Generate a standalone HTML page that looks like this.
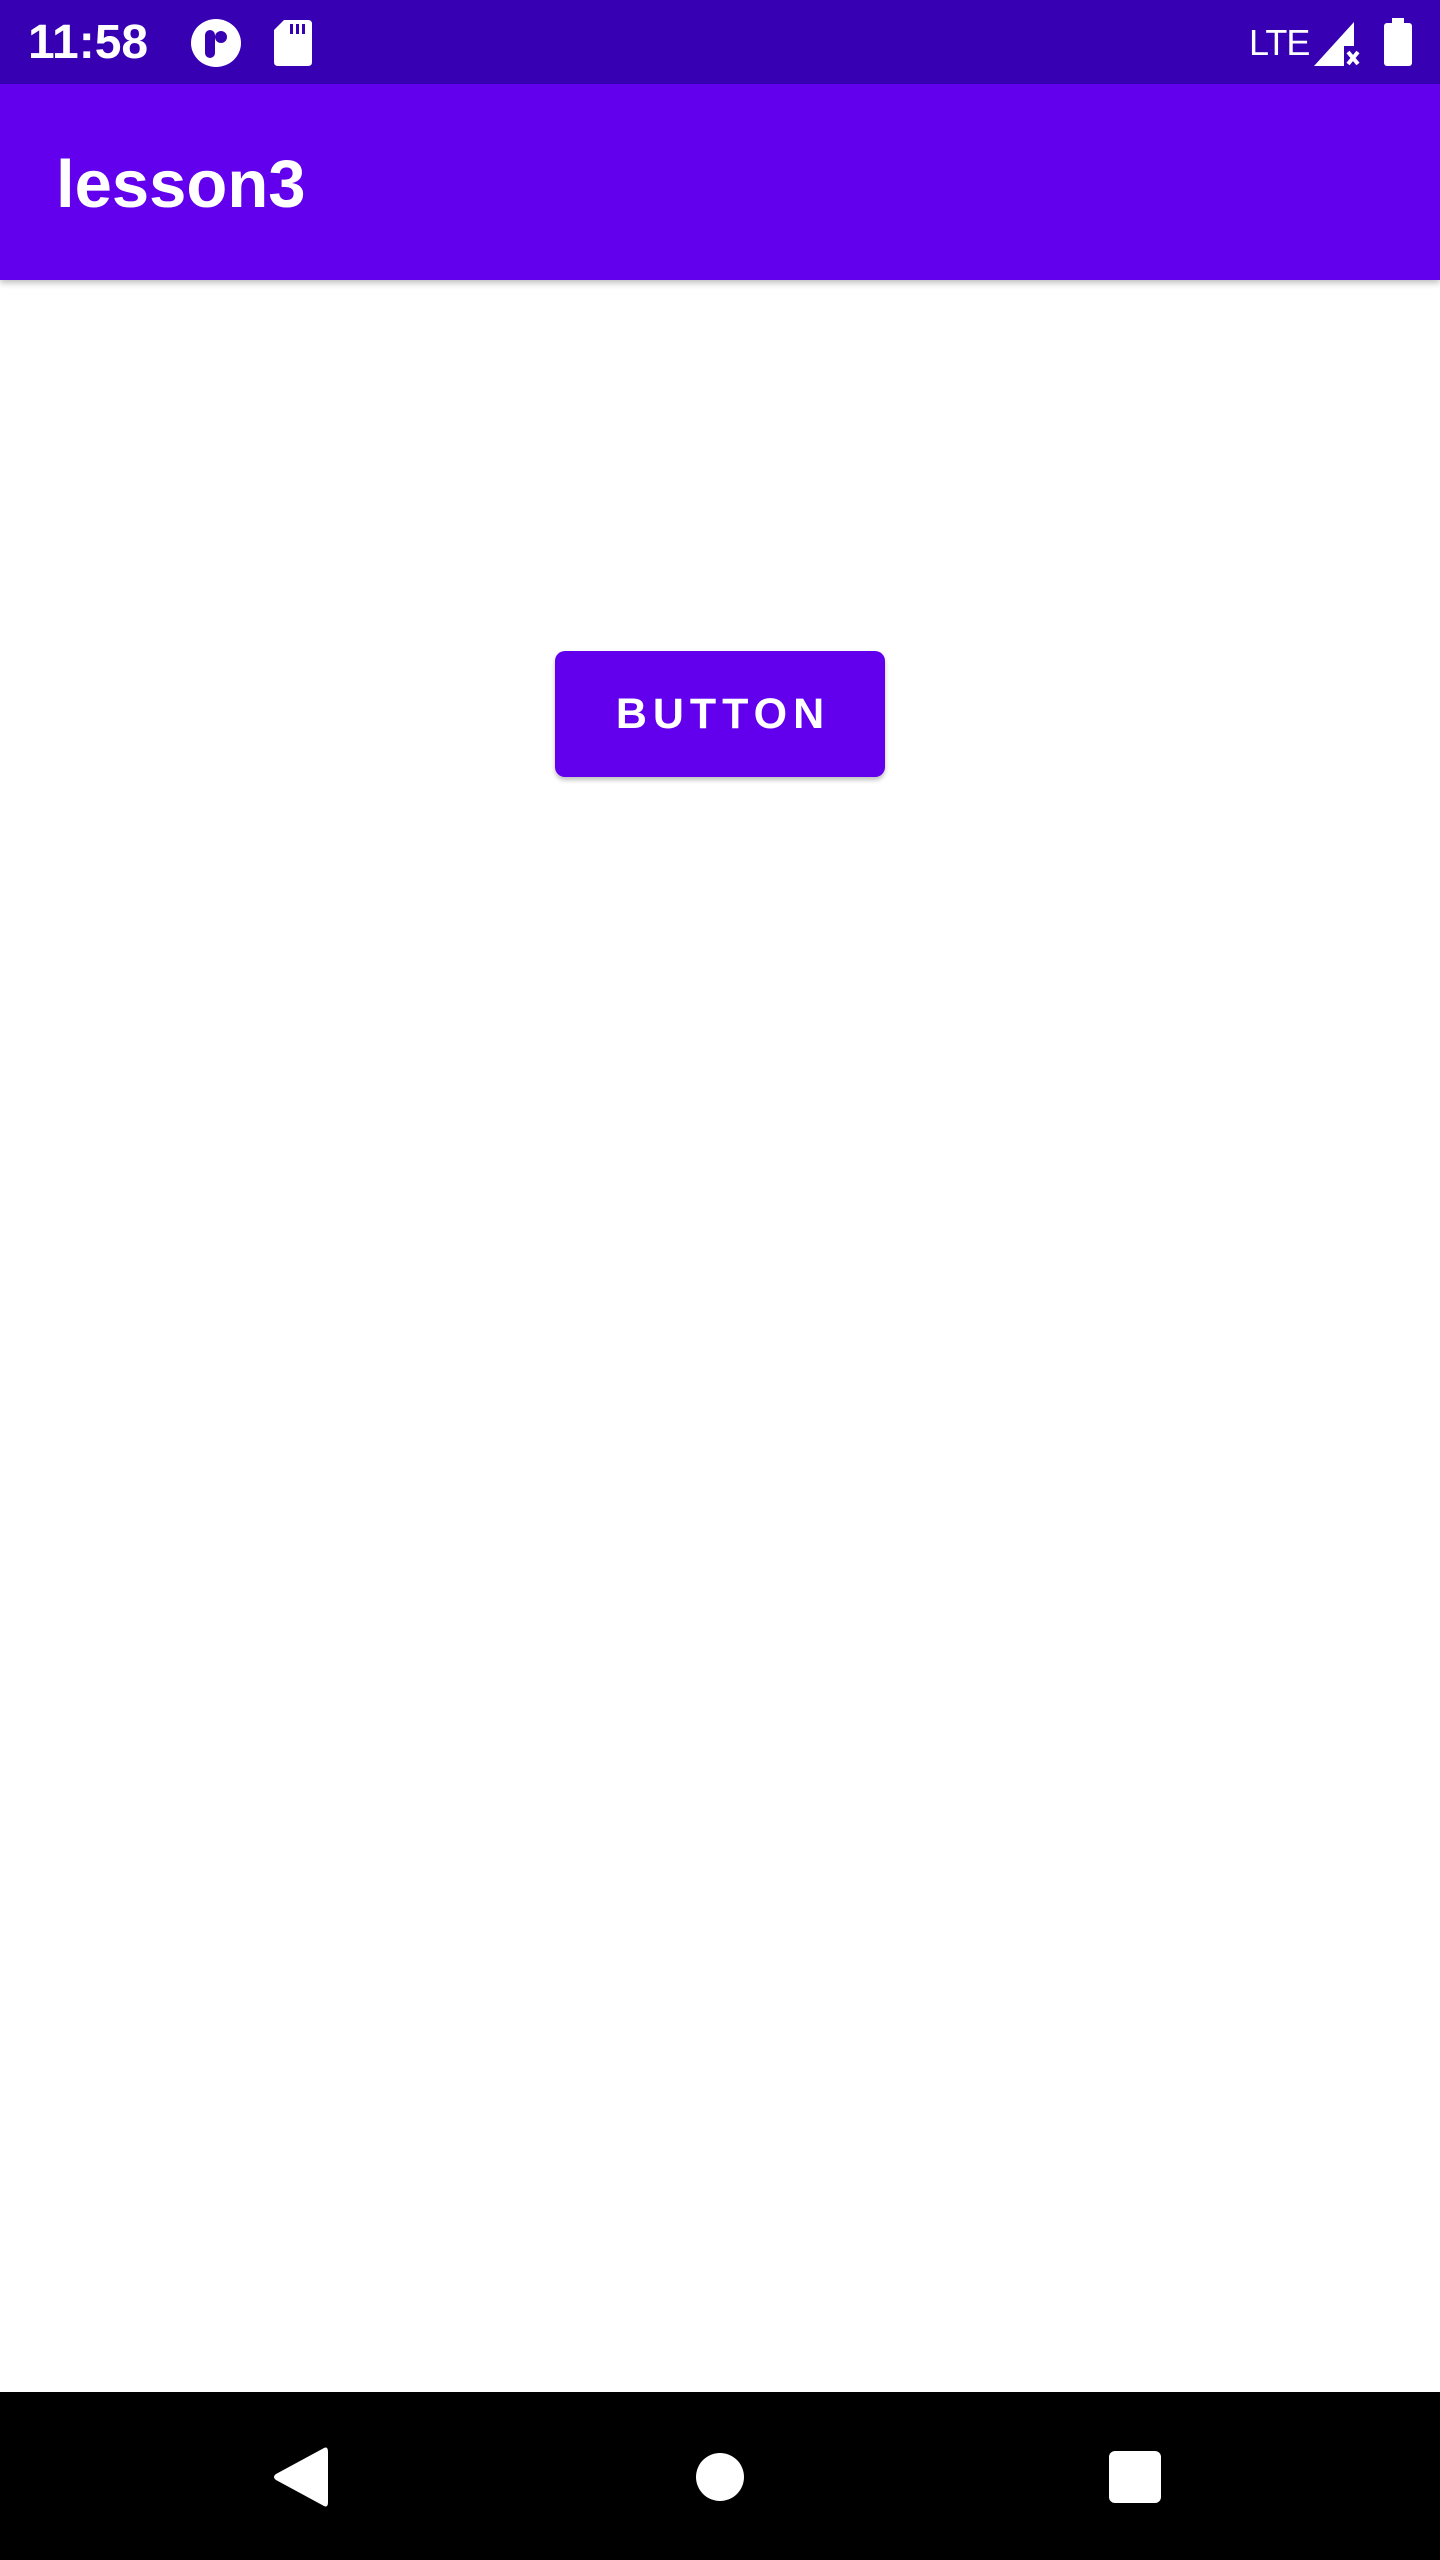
<!DOCTYPE html>
<html><head><meta charset="utf-8"><style>
*{margin:0;padding:0;box-sizing:border-box}
body{width:1440px;height:2560px;position:relative;background:#fff;font-family:"Liberation Sans",sans-serif;overflow:hidden}
.sb{position:absolute;left:0;top:0;width:1440px;height:84px;background:#3700B3;color:#fff}
.ab{position:absolute;left:0;top:84px;width:1440px;height:196px;background:#6200EE;box-shadow:0 3px 6px rgba(0,0,0,.25)}
.title{position:absolute;left:56px;top:140px;color:#fff;font-size:67px;font-weight:bold;line-height:90px}
.btn{position:absolute;left:555px;top:651px;width:330px;height:126px;background:#6200EE;border-radius:10px;box-shadow:0 3px 5px rgba(0,0,0,.25);color:#fff;font-size:43px;font-weight:bold;letter-spacing:6px;text-indent:6px;text-align:center;line-height:126px}
.nav{position:absolute;left:0;top:2392px;width:1440px;height:168px;background:#000}
</style></head><body>
<div class="sb">
<div style="position:absolute;left:28px;top:13px;font-size:48px;font-weight:bold;line-height:60px">11:58</div>
<svg style="position:absolute;left:190px;top:18px" width="52" height="50" viewBox="0 0 52 50"><ellipse cx="26" cy="25" rx="25" ry="24" fill="#fff"/><rect x="15" y="12" width="10" height="28" rx="5" fill="#3700B3"/><circle cx="31" cy="19" r="6" fill="#3700B3"/></svg>
<svg style="position:absolute;left:274px;top:20px" width="38" height="46" viewBox="0 0 38 46"><path d="M10 0H34Q38 0 38 4V42Q38 46 34 46H4Q0 46 0 42V10Z" fill="#fff"/><rect x="16" y="4" width="3" height="10" fill="#3700B3"/><rect x="22" y="4" width="3" height="10" fill="#3700B3"/><rect x="28" y="4" width="3" height="10" fill="#3700B3"/></svg>
<div style="position:absolute;left:1249px;top:18px;font-size:36px;line-height:50px;letter-spacing:-1px">LTE</div>
<svg style="position:absolute;left:1314px;top:20px" width="48" height="46" viewBox="0 0 48 46"><path d="M0 46L40 2V26H30V46Z" fill="#fff"/><path d="M34 32L44 44M44 32L34 44" stroke="#fff" stroke-width="4"/></svg>
<svg style="position:absolute;left:1384px;top:18px" width="28" height="48" viewBox="0 0 28 48"><rect x="8" y="0" width="12" height="6" fill="#fff"/><rect x="0" y="5" width="28" height="43" rx="3" fill="#fff"/></svg>
</div>
<div class="ab"></div>
<div class="title">lesson3</div>
<div class="btn">BUTTON</div>
<div class="nav">
<svg style="position:absolute;left:272px;top:54px" width="58" height="62" viewBox="0 0 58 62"><path d="M52 2Q56 0 56 6V56Q56 62 52 60L4 34Q0 31 4 28Z" fill="#fff"/></svg>
<div style="position:absolute;left:696px;top:61px;width:48px;height:48px;border-radius:50%;background:#fff"></div>
<div style="position:absolute;left:1109px;top:59px;width:52px;height:52px;border-radius:6px;background:#fff"></div>
</div>
</body></html>
